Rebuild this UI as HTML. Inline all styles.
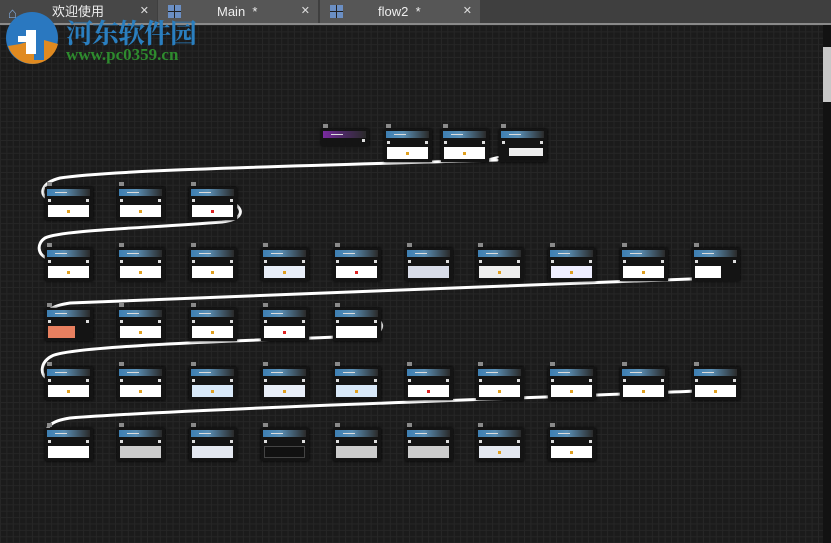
<!DOCTYPE html>
<html><head><meta charset="utf-8"><style>
*{margin:0;padding:0;box-sizing:border-box}
body{width:831px;height:543px;overflow:hidden;background:#1b1b1b;font-family:"Liberation Sans","Noto Sans CJK SC",sans-serif;position:relative}
.canvas{position:absolute;left:0;top:25px;width:823px;height:518px;background-color:#1b1b1b;background-image:linear-gradient(#262626 1px,transparent 1px),linear-gradient(90deg,#262626 1px,transparent 1px);background-size:6.4px 6.4px}
.bar{position:absolute;left:0;top:0;width:831px;height:25px;background:#3f3f3f;border-bottom:2px solid #8a8a8a}
.tab{position:absolute;top:0;height:23px;color:#eee;font-size:13px;line-height:23px}
.tab .x{position:absolute;right:8px;top:0;font-size:11px;color:#ddd}
.ic{position:absolute;left:10px;top:5px;width:13px;height:13px;background:linear-gradient(90deg,#6b8fc4 45%,#222 45%,#222 55%,#6b8fc4 55%)}
.ic:after{content:"";position:absolute;left:0;top:6px;width:13px;height:1px;background:#222}
.sb{position:absolute;left:823px;top:25px;width:8px;height:518px;background:#121212}
.th{position:absolute;left:823px;top:47px;width:8px;height:55px;background:#c8c8c8}
.n{position:absolute;width:48px;height:33px;background:#141414;box-shadow:0 0 3px #000}
.n:before{content:"";position:absolute;left:2px;top:-5px;width:5px;height:4px;background:#8a8a8a}
.h{position:absolute;left:2px;top:2px;width:43px;height:7px;background:linear-gradient(90deg,#3d7fb3,#5a8fb5 40%,#2a2a2a)}
.h:after{content:"";position:absolute;left:8px;top:3px;width:12px;height:1px;background:#ddd}
.p1,.p2{position:absolute;top:12px;width:3px;height:3px;background:#ddd}
.p1{left:3px}.p2{right:4px}
.w{position:absolute;left:3px;top:18px;width:41px;height:12px;background:#fff}
.w i{position:absolute;left:19px;top:5px;width:3px;height:3px;background:#e0a020}
.pu .h{background:linear-gradient(90deg,#7a2aa0,#4a2a60 50%,#2a2a2a)}
</style></head><body>
<div class="canvas"></div>
<div class="bar">
 <div class="tab" style="left:0;width:157px;background:#474747"><span style="position:absolute;left:8px;top:2px;color:#7fa8d8;font-size:15px">⌂</span><span style="position:absolute;left:52px">欢迎使用</span><span class="x">✕</span></div>
 <div class="tab" style="left:158px;width:160px;background:#565656"><div class="ic"></div><span style="position:absolute;left:59px">Main &nbsp;*</span><span class="x">✕</span></div>
 <div class="tab" style="left:320px;width:160px;background:#565656"><div class="ic"></div><span style="position:absolute;left:58px">flow2 &nbsp;*</span><span class="x">✕</span></div>
</div>
<div class="sb"></div><div class="th"></div>

<svg style="position:absolute;left:0;top:0" width="831" height="543">
<g fill="none" stroke="#fff" stroke-width="3" stroke-linecap="round">
<path d="M497 160 C300 166,110 170,60 178 C40 183,40 195,47 198"/>
<path d="M236 205 C245 212,240 220,222 222 C150 228,60 230,45 238 C36 244,38 255,47 258"/>
<path d="M716 278 C600 284,200 296,70 303 C50 306,44 312,48 320"/>
<path d="M378 320 C386 326,380 334,368 336 C250 340,70 346,52 356 C40 362,40 375,47 378"/>
<path d="M718 390 C600 396,200 408,70 418 C50 421,44 428,48 437"/>
<path d="M540 142 C548 146,548 154,540 156" stroke-width="2"/>
<path d="M490 159 L498 157" stroke-width="2"/>
</g></svg>

<!-- row0 -->
<div class="n pu" style="left:321px;top:129px;height:17px"><div class="h"></div><div class="p2" style="top:10px"></div></div>
<div class="n" style="left:384px;top:129px"><div class="h"></div><div class="p1"></div><div class="p2"></div><div class="w"><i></i></div></div>
<div class="n" style="left:441px;top:129px"><div class="h"></div><div class="p1"></div><div class="p2"></div><div class="w"><i></i></div></div>
<div class="n" style="left:499px;top:129px"><div class="h"></div><div class="p1"></div><div class="p2"></div><div class="w" style="left:10px;top:19px;height:8px;width:34px;background:#eee"></div></div>
<!-- row1 -->
<div class="n" style="left:45px;top:187px"><div class="h"></div><div class="p1"></div><div class="p2"></div><div class="w"><i></i></div></div>
<div class="n" style="left:117px;top:187px"><div class="h"></div><div class="p1"></div><div class="p2"></div><div class="w"><i></i></div></div>
<div class="n" style="left:189px;top:187px"><div class="h"></div><div class="p1"></div><div class="p2"></div><div class="w"><i style="background:#d22"></i></div></div>
<!-- row2 -->
<div class="n" style="left:45px;top:248px"><div class="h"></div><div class="p1"></div><div class="p2"></div><div class="w"><i></i></div></div>
<div class="n" style="left:117px;top:248px"><div class="h"></div><div class="p1"></div><div class="p2"></div><div class="w"><i></i></div></div>
<div class="n" style="left:189px;top:248px"><div class="h"></div><div class="p1"></div><div class="p2"></div><div class="w"><i></i></div></div>
<div class="n" style="left:261px;top:248px"><div class="h"></div><div class="p1"></div><div class="p2"></div><div class="w" style="background:#e8eef8"><i></i></div></div>
<div class="n" style="left:333px;top:248px"><div class="h"></div><div class="p1"></div><div class="p2"></div><div class="w"><i style="background:#d22"></i></div></div>
<div class="n" style="left:405px;top:248px"><div class="h"></div><div class="p1"></div><div class="p2"></div><div class="w" style="background:#d8dce8"></div></div>
<div class="n" style="left:476px;top:248px"><div class="h"></div><div class="p1"></div><div class="p2"></div><div class="w" style="background:#eee"><i></i></div></div>
<div class="n" style="left:548px;top:248px"><div class="h"></div><div class="p1"></div><div class="p2"></div><div class="w" style="background:#eef"><i></i></div></div>
<div class="n" style="left:620px;top:248px"><div class="h"></div><div class="p1"></div><div class="p2"></div><div class="w"><i></i></div></div>
<div class="n" style="left:692px;top:248px"><div class="h"></div><div class="p1"></div><div class="p2"></div><div class="w" style="width:26px"></div></div>
<!-- row3 -->
<div class="n" style="left:45px;top:308px"><div class="h"></div><div class="p1"></div><div class="p2"></div><div class="w" style="width:27px;background:#e88060"></div></div>
<div class="n" style="left:117px;top:308px"><div class="h"></div><div class="p1"></div><div class="p2"></div><div class="w"><i></i></div></div>
<div class="n" style="left:189px;top:308px"><div class="h"></div><div class="p1"></div><div class="p2"></div><div class="w"><i></i></div></div>
<div class="n" style="left:261px;top:308px"><div class="h"></div><div class="p1"></div><div class="p2"></div><div class="w"><i style="background:#d22"></i></div></div>
<div class="n" style="left:333px;top:308px"><div class="h"></div><div class="p1"></div><div class="p2"></div><div class="w"></div></div>
<!-- row4 -->
<div class="n" style="left:45px;top:367px"><div class="h"></div><div class="p1"></div><div class="p2"></div><div class="w"><i></i></div></div>
<div class="n" style="left:117px;top:367px"><div class="h"></div><div class="p1"></div><div class="p2"></div><div class="w"><i></i></div></div>
<div class="n" style="left:189px;top:367px"><div class="h"></div><div class="p1"></div><div class="p2"></div><div class="w" style="background:#d8e8f8"><i></i></div></div>
<div class="n" style="left:261px;top:367px"><div class="h"></div><div class="p1"></div><div class="p2"></div><div class="w" style="background:#e8eef8"><i></i></div></div>
<div class="n" style="left:333px;top:367px"><div class="h"></div><div class="p1"></div><div class="p2"></div><div class="w" style="background:#d8e8f8"><i></i></div></div>
<div class="n" style="left:405px;top:367px"><div class="h"></div><div class="p1"></div><div class="p2"></div><div class="w"><i style="background:#d22"></i></div></div>
<div class="n" style="left:476px;top:367px"><div class="h"></div><div class="p1"></div><div class="p2"></div><div class="w"><i></i></div></div>
<div class="n" style="left:548px;top:367px"><div class="h"></div><div class="p1"></div><div class="p2"></div><div class="w"><i></i></div></div>
<div class="n" style="left:620px;top:367px"><div class="h"></div><div class="p1"></div><div class="p2"></div><div class="w"><i></i></div></div>
<div class="n" style="left:692px;top:367px"><div class="h"></div><div class="p1"></div><div class="p2"></div><div class="w"><i></i></div></div>
<!-- row5 -->
<div class="n" style="left:45px;top:428px"><div class="h"></div><div class="p1"></div><div class="p2"></div><div class="w"></div></div>
<div class="n" style="left:117px;top:428px"><div class="h"></div><div class="p1"></div><div class="p2"></div><div class="w" style="background:#ccc"></div></div>
<div class="n" style="left:189px;top:428px"><div class="h"></div><div class="p1"></div><div class="p2"></div><div class="w" style="background:#e4e8f0"></div></div>
<div class="n" style="left:261px;top:428px"><div class="h"></div><div class="p1"></div><div class="p2"></div><div class="w" style="background:#111;border:1px solid #444"></div></div>
<div class="n" style="left:333px;top:428px"><div class="h"></div><div class="p1"></div><div class="p2"></div><div class="w" style="background:#ccc"></div></div>
<div class="n" style="left:405px;top:428px"><div class="h"></div><div class="p1"></div><div class="p2"></div><div class="w" style="background:#ccc"></div></div>
<div class="n" style="left:476px;top:428px"><div class="h"></div><div class="p1"></div><div class="p2"></div><div class="w" style="background:#e4e8f0"><i></i></div></div>
<div class="n" style="left:548px;top:428px"><div class="h"></div><div class="p1"></div><div class="p2"></div><div class="w"><i></i></div></div>

<!-- watermark -->
<svg style="position:absolute;left:4px;top:10px" width="58" height="58">
<circle cx="28" cy="28" r="26" fill="#2a78c0"/>
<path d="M4 36 A26 26 0 0 0 54 34 L40 30 L40 50 L30 50 L30 30 L16 34 Z" fill="#e08a20"/>
<rect x="22" y="20" width="10" height="24" fill="#fff"/>
<rect x="14" y="26" width="14" height="6" fill="#fff"/>
</svg>
<div style="position:absolute;left:66px;top:12px;color:#2a7fc0;font:bold 27px 'Noto Serif CJK SC',serif;letter-spacing:-1px">河东软件园</div>
<div style="position:absolute;left:66px;top:45px;color:#2e8b2e;font:bold 17px 'Liberation Serif',serif">www.pc0359.cn</div>
</body></html>
